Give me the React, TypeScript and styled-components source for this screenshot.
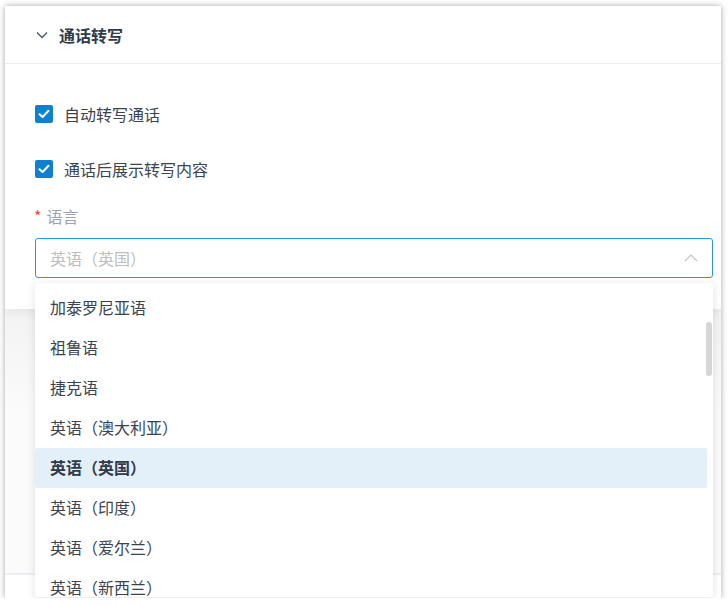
import React from 'react';
import styled, { createGlobalStyle } from 'styled-components';

const GlobalStyle = createGlobalStyle`
  html, body {
    margin: 0;
    padding: 0;
    background: #ffffff;
    font-family: "Noto Sans CJK SC", "Noto Sans", sans-serif;
  }
`;

const Frame = styled.div`
  position: relative;
  margin: 6px 7px 0 5px;
  height: 592px;
  background: #ffffff;
  box-shadow: 0 0 6px rgba(0, 0, 0, 0.35);
  display: flex;
  flex-direction: column;
  overflow: hidden;
`;

const Section = styled.div`
  background: #ffffff;
  box-shadow: 0 4px 10px rgba(0, 0, 0, 0.06);
  position: relative;
  z-index: 1;
`;

const Header = styled.div`
  height: 58px;
  display: flex;
  align-items: center;
  gap: 11px;
  padding-left: 31px;
  border-bottom: 1px solid #e8edf4;
  box-sizing: border-box;
`;

const HeaderTitle = styled.span`
  font-size: 16px;
  font-weight: 700;
  color: #2f3a4a;
`;

const Body = styled.div`
  padding: 35px 8px 31px 30px;
  display: flex;
  flex-direction: column;
`;

const CheckRow = styled.label`
  display: flex;
  align-items: center;
  gap: 11px;
  height: 30px;
  margin-bottom: 25px;
  font-size: 16px;
  color: #3a4450;
`;

const Box = styled.span`
  width: 18px;
  height: 18px;
  border-radius: 2px;
  background: #0f80cf;
  display: flex;
  align-items: center;
  justify-content: center;
`;

const FieldLabel = styled.div`
  font-size: 16px;
  color: #9aa3b2;
  height: 22px;
  display: flex;
  align-items: center;
  margin-top: -4px;
  margin-bottom: 11px;
`;

const Star = styled.span`
  color: #f0483e;
  margin-right: 5px;
  margin-left: -1px;
  font-size: 16px;
`;

const SelectBox = styled.div`
  height: 40px;
  box-sizing: border-box;
  border: 1px solid #2d97d8;
  border-radius: 3px;
  display: flex;
  align-items: center;
  justify-content: space-between;
  padding: 0 14px 1px 14px;
  font-size: 16px;
  color: #bdbdbd;
`;

const Lower = styled.div`
  flex: 1;
  background: linear-gradient(#f3f3f3, #fbfbfb 40%, #fbfbfb);
`;

const Footer = styled.div`
  height: 23px;
  border-top: 2px solid #ebeef3;
  background: #ffffff;
`;

const Dropdown = styled.div`
  position: absolute;
  left: 30px;
  top: 277px;
  width: 678px;
  height: 314px;
  background: #ffffff;
  border-radius: 3px;
  box-shadow: 0 2px 10px rgba(0, 0, 0, 0.12);
  z-index: 5;
  overflow: hidden;
`;

const List = styled.div`
  padding-top: 5px;
  padding-right: 6px;
`;

const Option = styled.div<{ selected?: boolean }>`
  height: 40px;
  box-sizing: border-box;
  display: flex;
  align-items: center;
  padding: 0 0 2px 15px;
  font-size: 16px;
  color: ${p => (p.selected ? '#2f3a4a' : '#3a4450')};
  font-weight: ${p => (p.selected ? 700 : 400)};
  background: ${p => (p.selected ? '#e4f0f9' : 'transparent')};
  border-radius: 2px;
`;

const Thumb = styled.div`
  position: absolute;
  right: 1px;
  top: 39px;
  width: 6px;
  height: 54px;
  border-radius: 3px;
  background: #d6d6d6;
`;

const options = [
  '加泰罗尼亚语',
  '祖鲁语',
  '捷克语',
  '英语（澳大利亚）',
  '英语（英国）',
  '英语（印度）',
  '英语（爱尔兰）',
  '英语（新西兰）',
];

const Check = () => (
  <svg width="12" height="10" viewBox="0 0 12 10">
    <path d="M1.5 5.2 L4.6 8 L10.5 1.8" fill="none" stroke="#fff" strokeWidth="2" strokeLinecap="round" strokeLinejoin="round" />
  </svg>
);

const App: React.FunctionComponent = () => (
  <>
    <GlobalStyle />
    <Frame>
      <Section>
        <Header>
          <svg width="12" height="8" viewBox="0 0 12 8">
            <path d="M1 1.5 L6 6.5 L11 1.5" fill="none" stroke="#4a5565" strokeWidth="1.3" />
          </svg>
          <HeaderTitle>通话转写</HeaderTitle>
        </Header>
        <Body>
          <CheckRow>
            <Box><Check /></Box>
            自动转写通话
          </CheckRow>
          <CheckRow>
            <Box><Check /></Box>
            通话后展示转写内容
          </CheckRow>
          <FieldLabel><Star>*</Star>语言</FieldLabel>
          <SelectBox>
            英语（英国）
            <svg width="14" height="8" viewBox="0 0 14 8">
              <path d="M1 7 L7 1 L13 7" fill="none" stroke="#c4c4c4" strokeWidth="1.2" />
            </svg>
          </SelectBox>
        </Body>
      </Section>
      <Lower />
      <Footer />
      <Dropdown>
        <List>
          {options.map(o => (
            <Option key={o} selected={o === '英语（英国）'}>{o}</Option>
          ))}
        </List>
        <Thumb />
      </Dropdown>
    </Frame>
  </>
);

export default App;
